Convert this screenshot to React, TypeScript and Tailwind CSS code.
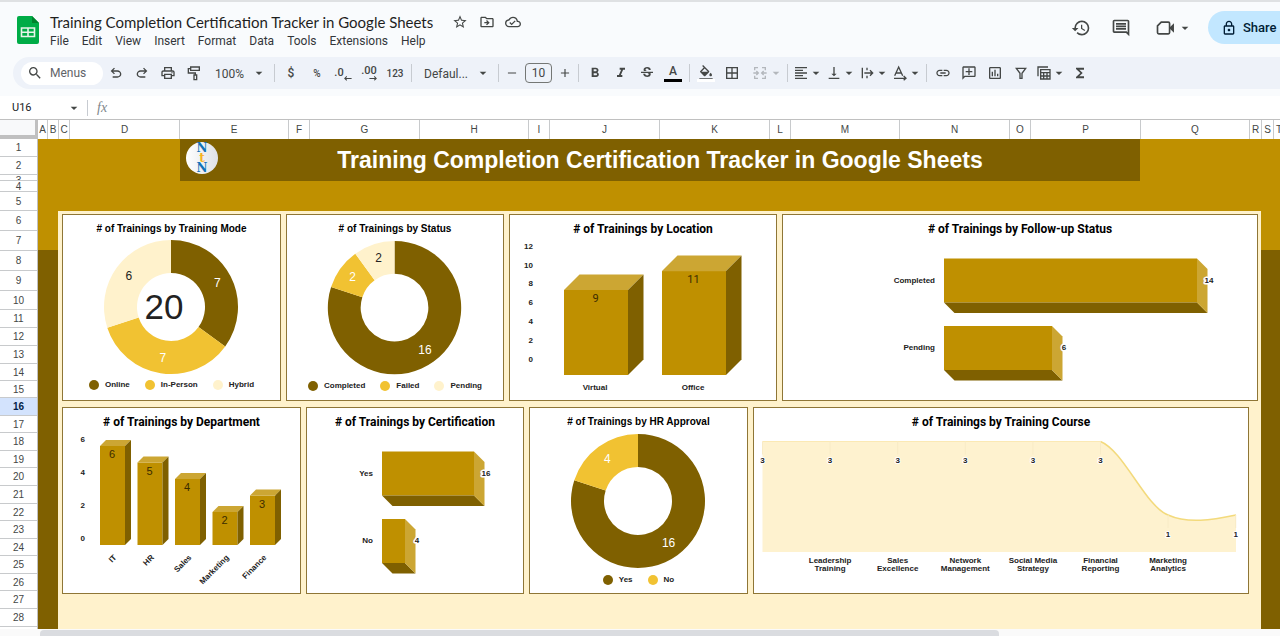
import React from 'react';
import {
  MdAdd,
  MdArrowDropDown,
  MdBorderAll,
  MdFormatAlignLeft,
  MdFormatBold,
  MdFormatColorFill,
  MdFormatItalic,
  MdFunctions,
  MdHistory,
  MdLink,
  MdOutlineAddComment,
  MdOutlineCloudDone,
  MdOutlineDriveFileMove,
  MdOutlineInsertChart,
  MdOutlineInsertComment,
  MdOutlineLocalPrintshop,
  MdOutlineLock,
  MdRemove,
  MdSearch,
  MdStarBorder,
  MdStrikethroughS,
  MdVerticalAlignBottom,
} from 'react-icons/md';

const GOLD = '#bf9000';
const DARK = '#7f6000';
const LIGHT = '#cca633';
const YELLOW = '#f1c232';
const CREAM = '#fff2cc';

const menus = ['File', 'Edit', 'View', 'Insert', 'Format', 'Data', 'Tools', 'Extensions', 'Help'];

const columns: [string, number][] = [
  ['A', 10], ['B', 11], ['C', 11], ['D', 110], ['E', 109], ['F', 21], ['G', 110], ['H', 109],
  ['I', 21], ['J', 110], ['K', 110], ['L', 21], ['M', 109], ['N', 110], ['O', 21], ['P', 110],
  ['Q', 109], ['R', 12], ['S', 12],
];

const rowHeights = [
  18, 18, 6, 11, 19, 20, 20, 20, 20, 19, 18, 18, 18, 17, 17, 18, 17, 18, 17, 18, 18, 17, 18, 17, 18,
  17, 18, 18,
];

/* ---------- Icons ---------- */

const UndoIcon = ({ className = '' }: { className?: string }) => (
  <svg viewBox="0 -960 960 960" fill="currentColor" className={className}>
    <path d="M280-200v-80h284q63 0 109.5-40T720-420q0-60-46.5-100T564-560H312l104 104-56 56-200-200 200-200 56 56-104 104h252q97 0 167 63t70 157q0 94-70 157t-167 63H280Z" />
  </svg>
);

const PaintRollerIcon = () => (
  <svg viewBox="0 0 24 24" fill="none" stroke="currentColor" strokeWidth="2" className="size-4">
    <path d="M7 3h13v5H7zM7 5.500H3.500V12H14v3M12 15h4v7h-4z" />
  </svg>
);

const DecimalArrow = ({ left = false }: { left?: boolean }) => (
  <svg viewBox="0 0 10 6" fill="none" stroke="currentColor" className={left ? 'w-2' : 'w-2 rotate-180'}>
    <path d="M9.500 3H1M3.500 .5 1 3l2.500 2.500" strokeWidth="1.300" />
  </svg>
);

const MergeIcon = () => (
  <svg viewBox="0 0 24 24" fill="none" stroke="currentColor" strokeWidth="2" className="size-4">
    <path d="M9 4H4v4M15 4h5v4M9 20H4v-4M15 20h5v-4M2 12h7M6.500 9l3 3-3 3M22 12h-7M17.500 9l-3 3 3 3" />
  </svg>
);

const WrapIcon = () => (
  <svg viewBox="0 0 24 24" fill="none" stroke="currentColor" strokeWidth="2" className="size-4">
    <path d="M5 4v16M12 4v4M12 16v4M8 12h12M16.500 8l4 4-4 4" />
  </svg>
);

const RotateIcon = () => (
  <svg viewBox="0 0 24 24" fill="none" stroke="currentColor" strokeWidth="2" className="size-4">
    <path d="M4 16 10 3l6 13M6 12h8M3 20h17M17.500 16.500 21 20l-3.500 3" />
  </svg>
);

const FilterIcon = () => (
  <svg viewBox="0 0 24 24" fill="none" stroke="currentColor" strokeWidth="2" className="size-4">
    <path d="M5 5h14l-5.500 7.500V20h-3v-7.500z" />
  </svg>
);

const TableViewIcon = () => (
  <svg viewBox="0 0 24 24" fill="none" stroke="currentColor" strokeWidth="2" className="size-4">
    <path d="M3 17V3h15M7 7h14v14H7zM7 11.500h14M7 16.500h14M11.500 11.500V21M16.500 11.500V21" />
  </svg>
);

const MeetIcon = () => (
  <svg viewBox="0 0 24 24" fill="none" stroke="currentColor" strokeWidth="2" className="size-5">
    <path d="M7.500 5H16a1.500 1.500 0 0 1 1.500 1.500v11A1.500 1.500 0 0 1 16 19H4.500A1.500 1.500 0 0 1 3 17.500v-8z" />
    <path d="m18 12 4-4v8z" fill="currentColor" strokeWidth="1.500" />
  </svg>
);

const SheetsLogo = () => (
  <svg viewBox="0 0 22 28" className="h-7 w-[22px] shrink-0">
    <path d="M2 0h13l7 7v19a2 2 0 0 1-2 2H2a2 2 0 0 1-2-2V2a2 2 0 0 1 2-2z" fill="#00ac47" />
    <path d="m15 0 7 7h-7z" fill="#00832d" />
    <path d="M4.500 12h13v8.500h-13zM4.500 16.200h13M11 12v8.500" fill="none" stroke="#e6f4ea" strokeWidth="1.600" />
  </svg>
);

/* ---------- Toolbar pieces ---------- */

const Divider = () => <span className="mx-[3px] h-[18px] w-px shrink-0 bg-[#c7cbd1]" />;

const Tool: React.FC<{ label: string; children: React.ReactNode }> = ({ label, children }) => (
  <button
    aria-label={label}
    className="flex h-6 w-[26px] shrink-0 items-center justify-center rounded hover:bg-black/5"
  >
    {children}
  </button>
);

const MenuTool: React.FC<{ label: string; children: React.ReactNode }> = ({ label, children }) => (
  <button aria-label={label} className="flex h-6 w-[33px] shrink-0 items-center rounded pl-0.5 hover:bg-black/5">
    {children}
    <MdArrowDropDown className="-ml-px size-4 shrink-0" />
  </button>
);

const Toolbar = () => (
  <div className="ml-[13px] flex h-8 items-center overflow-hidden rounded-l-full bg-[#eef2f9] text-[#444746]">
    <button className="ml-2 flex h-[23px] w-[82px] shrink-0 items-center gap-[7px] rounded-full bg-white pl-1.5 text-[12px] text-[#5f6368]">
      <MdSearch className="size-4 text-[#444746]" />
      Menus
    </button>
    <Tool label="Undo"><UndoIcon className="size-4" /></Tool>
    <Tool label="Redo"><UndoIcon className="size-4 -scale-x-100" /></Tool>
    <Tool label="Print"><MdOutlineLocalPrintshop className="size-4" /></Tool>
    <Tool label="Paint format"><PaintRollerIcon /></Tool>
    <div className="relative w-16 shrink-0">
      <select aria-label="Zoom" className="h-6 w-full appearance-none bg-transparent pl-2 text-[12px]">
        <option>100%</option>
      </select>
      <MdArrowDropDown className="pointer-events-none absolute right-1 top-1 size-4" />
    </div>
    <Divider />
    <Tool label="Format as currency"><span className="text-[12px] font-medium">$</span></Tool>
    <Tool label="Format as percent"><span className="text-[10px] font-medium">%</span></Tool>
    <Tool label="Decrease decimal places">
      <span className="flex items-end text-[11px] leading-4 font-medium">.0<DecimalArrow left /></span>
    </Tool>
    <Tool label="Increase decimal places">
      <span className="flex flex-col items-end text-[11px] leading-[10px] font-medium">.00<DecimalArrow /></span>
    </Tool>
    <Tool label="More formats"><span className="text-[10px] font-medium">123</span></Tool>
    <Divider />
    <div className="relative w-20 shrink-0">
      <select aria-label="Font" className="h-6 w-full appearance-none bg-transparent pl-[9px] text-[12px]">
        <option>Defaul...</option>
      </select>
      <MdArrowDropDown className="pointer-events-none absolute right-1 top-1 size-4" />
    </div>
    <Divider />
    <button aria-label="Decrease font size" className="flex h-6 w-5 shrink-0 items-center justify-center">
      <MdRemove className="size-[14px]" />
    </button>
    <input
      aria-label="Font size"
      defaultValue="10"
      className="mx-[3px] h-5 w-[27px] shrink-0 rounded border border-[#747775] bg-transparent text-center text-[12px]"
    />
    <button aria-label="Increase font size" className="flex h-6 w-5 shrink-0 items-center justify-center">
      <MdAdd className="size-[14px]" />
    </button>
    <Divider />
    <Tool label="Bold"><MdFormatBold className="size-4" /></Tool>
    <Tool label="Italic"><MdFormatItalic className="size-4" /></Tool>
    <Tool label="Strikethrough"><MdStrikethroughS className="size-4" /></Tool>
    <Tool label="Text color">
      <span className="flex flex-col items-center text-[12px] leading-3 font-medium">
        A<span className="mt-0.5 h-[3px] w-[18px] bg-black" />
      </span>
    </Tool>
    <Divider />
    <Tool label="Fill color">
      <span className="flex flex-col items-center">
        <MdFormatColorFill className="size-4" />
        <span className="-mt-0.5 h-[3px] w-[18px] bg-white" />
      </span>
    </Tool>
    <Tool label="Borders"><MdBorderAll className="size-4" /></Tool>
    <button
      aria-label="Merge cells"
      disabled
      className="flex h-6 w-[39px] shrink-0 items-center justify-between pl-[7px] text-[#b3b7bc]"
    >
      <MergeIcon />
      <MdArrowDropDown className="size-4" />
    </button>
    <Divider />
    <MenuTool label="Horizontal align"><MdFormatAlignLeft className="size-4 shrink-0" /></MenuTool>
    <MenuTool label="Vertical align"><MdVerticalAlignBottom className="size-4 shrink-0" /></MenuTool>
    <MenuTool label="Text wrapping"><WrapIcon /></MenuTool>
    <MenuTool label="Text rotation"><RotateIcon /></MenuTool>
    <Divider />
    <Tool label="Insert link"><MdLink className="size-4" /></Tool>
    <Tool label="Insert comment"><MdOutlineAddComment className="size-4 -scale-x-100" /></Tool>
    <Tool label="Insert chart"><MdOutlineInsertChart className="size-4" /></Tool>
    <Tool label="Create a filter"><FilterIcon /></Tool>
    <MenuTool label="Filter views"><TableViewIcon /></MenuTool>
    <Tool label="Functions"><MdFunctions className="size-4" /></Tool>
  </div>
);

const Header = () => (
  <header className="border-t-2 border-[#dfe1e3] bg-[#f9fbfd] pb-[7px]">
    <div className="flex h-[55px] pl-[17px]">
      <div className="pt-3.5"><SheetsLogo /></div>
      <div className="ml-[11px] pt-[9px]">
        <div className="flex h-[22px] items-center text-[#444746]">
          <h1 className="font-['Lato'] text-[15px] text-[#1f1f1f]">
            Training Completion Certification Tracker in Google Sheets
          </h1>
          <button aria-label="Star" className="ml-[19px]"><MdStarBorder className="size-4" /></button>
          <button aria-label="Move" className="ml-[11px]"><MdOutlineDriveFileMove className="size-4" /></button>
          <button aria-label="Saved to Drive" className="ml-[10px]"><MdOutlineCloudDone className="size-4" /></button>
        </div>
        <nav className="flex gap-[13px] text-[12px] leading-4 text-[#33363a]">
          {menus.map((m) => (
            <button key={m}>{m}</button>
          ))}
        </nav>
      </div>
      <div className="ml-auto flex items-start pt-[9px] text-[#444746]">
        <div className="flex h-[33px] items-center">
          <button aria-label="Version history"><MdHistory className="size-5" /></button>
          <button aria-label="Comments" className="ml-5"><MdOutlineInsertComment className="size-5" /></button>
          <button aria-label="Join a call" className="ml-6 flex items-center">
            <MeetIcon />
            <MdArrowDropDown className="ml-0.5 size-4" />
          </button>
        </div>
        <button className="ml-[15px] flex h-[33px] w-[72px] items-center gap-1.5 rounded-l-full bg-[#c2e7ff] pl-[13px] text-[13px] font-medium text-[#001d35]">
          <MdOutlineLock className="size-4 shrink-0" />
          Share
        </button>
      </div>
    </div>
    <Toolbar />
  </header>
);

const FormulaBar = () => (
  <div className="flex h-[23px] items-center bg-white">
    <div className="flex w-[88px] items-center justify-between border-r border-[#c7cbd1] pr-[5px] pl-3 text-[11px] leading-4 text-[#202124]">
      U16
      <MdArrowDropDown className="size-4 text-[#444746]" />
    </div>
    <span className="ml-[9px] font-['Liberation_Serif'] text-[14px] text-[#80868b] italic">fx</span>
    <input aria-label="Formula" className="h-full flex-1 bg-transparent px-2 text-[12px] outline-none" />
  </div>
);

const ColumnHeader = () => (
  <div className="flex h-5 border-t border-[#c0c0c0] bg-white font-['Liberation_Sans'] text-[10px] text-[#444746]">
    <div className="w-[38px] shrink-0 border-r-[3px] border-b-4 border-[#c0c0c0] bg-[#f8f9fa]" />
    {columns.map(([name, width]) => (
      <div
        key={name}
        style={{ width }}
        className="flex shrink-0 items-center justify-center overflow-hidden border-r border-[#c8cacc]"
      >
        {name}
      </div>
    ))}
    <div className="flex flex-1 items-center overflow-hidden pl-0.5">T</div>
  </div>
);

const RowHeader = () => (
  <div className="w-[38px] shrink-0 border-r border-[#c0c0c0] bg-white font-['Liberation_Sans'] text-[10px] text-[#444746]">
    {rowHeights.map((height, i) => (
      <div
        key={i}
        style={{ height }}
        className={
          i + 1 === 16
            ? 'flex items-center justify-center border-b border-[#c8cacc] bg-[#d3e3fd] font-bold text-[#041e49]'
            : height < 10
              ? 'flex items-start justify-center overflow-hidden border-b border-[#c8cacc] leading-3'
              : 'flex items-center justify-center overflow-hidden border-b border-[#c8cacc]'
        }
      >
        {i + 1}
      </div>
    ))}
  </div>
);

/* ---------- Charts ---------- */

interface CardProps {
  title: string;
  titleClass?: string;
  children: React.ReactNode;
}

const Card: React.FC<CardProps> = ({ title, titleClass = "font-['Roboto'] text-[12px]", children }) => (
  <section className="border border-[#8f7636] bg-white pt-[5px] pb-px">
    <h3 className={`text-center leading-[18px] font-bold whitespace-nowrap text-black ${titleClass}`}>{title}</h3>
    {children}
  </section>
);

interface Slice {
  name: string;
  value: number;
  color: string;
  dark?: boolean;
}

interface DonutProps {
  slices: Slice[];
  height: number;
  cy: number;
  center?: string;
}

const Donut: React.FC<DonutProps> = ({ slices, height, cy, center }) => {
  const cx = 108;
  const r = 67;
  const hole = 34;
  const total = slices.reduce((sum, s) => sum + s.value, 0);
  const at = (share: number, radius: number) => {
    const a = share * 2 * Math.PI;
    return [cx + radius * Math.sin(a), cy - radius * Math.cos(a)];
  };
  let start = 0;

  return (
    <>
      <svg viewBox={`0 0 217 ${height}`} className="block w-full">
        {slices.map((s) => {
          const from = start;
          const to = start + s.value / total;
          start = to;
          const large = to - from > 0.5 ? 1 : 0;
          const [lx, ly] = at((from + to) / 2, 52);
          return (
            <g key={s.name}>
              <path
                d={`M${at(from, r)} A${r} ${r} 0 ${large} 1 ${at(to, r)} L${at(to, hole)} A${hole} ${hole} 0 ${large} 0 ${at(from, hole)}Z`}
                fill={s.color}
              />
              <text x={lx} y={ly + 4} textAnchor="middle" fill={s.dark ? '#222' : '#fff'} className="text-[12px]">
                {s.value}
              </text>
            </g>
          );
        })}
        {center && (
          <text x="101" y={cy + 12} textAnchor="middle" fill="#222" className="text-[35px]">
            {center}
          </text>
        )}
      </svg>
      <ul className="flex justify-center gap-[15px] text-[8px] leading-[18px] font-bold text-[#222]">
        {slices.map((s) => (
          <li key={s.name} className="flex items-center gap-1.5">
            <span className="size-[10px] rounded-full" style={{ backgroundColor: s.color }} />
            {s.name}
          </li>
        ))}
      </ul>
    </>
  );
};

// Upright bar with a top and a right face
const Column3D = ({ x, top, base, width, depth }: Record<'x' | 'top' | 'base' | 'width' | 'depth', number>) => (
  <g>
    <rect x={x} y={top} width={width} height={base - top} fill={GOLD} />
    <path d={`M${x} ${top}l${depth} ${-depth}h${width}l${-depth} ${depth}z`} fill={LIGHT} />
    <path d={`M${x + width} ${top}l${depth} ${-depth}V${base - depth}l${-depth} ${depth}z`} fill={DARK} />
  </g>
);

// Lying bar with a bottom and a right face
const Bar3D = ({ x, y, width }: Record<'x' | 'y' | 'width', number>) => (
  <g>
    <rect x={x} y={y} width={width} height="44" fill={GOLD} />
    <path d={`M${x} ${y + 44}h${width}l10.500 10.500h${-width}z`} fill={DARK} />
    <path d={`M${x + width} ${y}l10.500 10.500v44l-10.500 -10.500z`} fill={LIGHT} />
  </g>
);

const LocationChart = () => {
  const bars = [
    { name: 'Virtual', value: 9, x: 54 },
    { name: 'Office', value: 11, x: 152 },
  ];
  return (
    <svg viewBox="0 0 266 161" className="block w-full">
      {[0, 2, 4, 6, 8, 10, 12].map((n) => (
        <text key={n} x="23" y={124 - n * 9.45} textAnchor="end" fill="#222" className="text-[8px] font-bold">
          {n}
        </text>
      ))}
      {bars.map((b) => {
        const top = 137 - b.value * 9.45;
        return (
          <g key={b.name}>
            <Column3D x={b.x} top={top} base={137} width={64} depth={15.5} />
            <text x={b.x + 31.5} y={top + 12} textAnchor="middle" fill="#3b2c00" className="font-['Roboto'] text-[11px]">
              {b.value}
            </text>
            <text x={b.x + 31} y="152" textAnchor="middle" fill="#222" className="text-[8px] font-bold">
              {b.name}
            </text>
          </g>
        );
      })}
    </svg>
  );
};

const DepartmentChart = () => {
  const bars: [string, number][] = [['IT', 6], ['HR', 5], ['Sales', 4], ['Marketing', 2], ['Finance', 3]];
  return (
    <svg viewBox="0 0 237 161" className="block w-full">
      {[0, 2, 4, 6].map((n) => (
        <text key={n} x="22" y={110 - n * 16.5} textAnchor="end" fill="#222" className="text-[8px] font-bold">
          {n}
        </text>
      ))}
      {bars.map(([name, value], i) => {
        const x = 37 + i * 37.5;
        const top = 114 - value * 16.5;
        return (
          <g key={name}>
            <Column3D x={x} top={top} base={114} width={25} depth={6} />
            <text x={x + 12} y={top + 12} textAnchor="middle" fill="#3b2c00" className="text-[11px]">
              {value}
            </text>
            <text
              transform={`translate(${x + 17} 127) rotate(-45)`}
              textAnchor="end"
              fill="#222"
              className="text-[8px] font-bold"
            >
              {name}
            </text>
          </g>
        );
      })}
    </svg>
  );
};

interface BarRow {
  name: string;
  value: number;
  width: number;
}

const BarChart = ({ rows, x, viewWidth }: { rows: BarRow[]; x: number; viewWidth: number }) => (
  <svg viewBox={`0 0 ${viewWidth} 161`} className="block w-full">
    {rows.map((row, i) => {
      const y = 20.5 + i * 67.5;
      return (
        <g key={row.name}>
          <Bar3D x={x} y={y} width={row.width} />
          <text x={x - 9} y={y + 24} textAnchor="end" fill="#222" className="text-[8px] font-bold">
            {row.name}
          </text>
          <text
            x={x + row.width + 12}
            y={y + 24}
            textAnchor="middle"
            fill="#222"
            stroke="#fff"
            strokeWidth="3"
            strokeLinejoin="round"
            paintOrder="stroke"
            className="text-[8px] font-bold"
          >
            {row.value}
          </text>
        </g>
      );
    })}
  </svg>
);

const CourseChart = () => {
  const values = [3, 3, 3, 3, 3, 3, 1, 1];
  const labels = [
    ['Leadership', 'Training'],
    ['Sales', 'Excellence'],
    ['Network', 'Management'],
    ['Social Media', 'Strategy'],
    ['Financial', 'Reporting'],
    ['Marketing', 'Analytics'],
  ];
  const px = (i: number) => 8.5 + i * 67.6;
  const curve = 'C370 20 391 75 414 84C434 93 458 89 482 84';
  return (
    <svg viewBox="0 0 494 161" className="block w-full">
      <path d={`M8.500 10.500H346.500${curve}V121H8.500z`} fill="#fef2cf" />
      <path d="M8.500 10.500H346.500" stroke="#fbe9b4" fill="none" />
      <path d={`M346.500 10.500${curve}`} stroke="#f3da7c" strokeWidth="1.500" fill="none" />
      {values.map((v, i) => {
        const top = v === 3 ? 10.5 : 84;
        return (
          <g key={i}>
            <path d={`M${px(i)} ${top}v13`} stroke="#f8ebc6" />
            <text
              x={px(i)}
              y={top + 21.5}
              textAnchor="middle"
              fill="#222"
              stroke="#fff"
              strokeWidth="2"
              strokeLinejoin="round"
              paintOrder="stroke"
              className="text-[8px] font-bold"
            >
              {v}
            </text>
          </g>
        );
      })}
      {labels.map(([first, second], i) => (
        <text key={first} textAnchor="middle" fill="#222" className="text-[8px] font-bold">
          <tspan x={px(i + 1)} y="132">{first}</tspan>
          <tspan x={px(i + 1)} y="140">{second}</tspan>
        </text>
      ))}
    </svg>
  );
};

/* ---------- Dashboard ---------- */

const Badge = () => (
  <div className="flex size-8 shrink-0 flex-col items-center justify-center rounded-full bg-linear-to-r from-white to-[#dfe1e6] font-['DejaVu_Serif'] text-[12px] leading-[10px] font-bold text-[#1272b8]">
    <span>N</span>
    <span className="text-[#f6b221]">t</span>
    <span>N</span>
  </div>
);

const Dashboard = () => (
  <main className="flex flex-1 flex-col bg-[#7f6000] font-['Liberation_Sans']">
    <div className="h-[72px] bg-[#bf9000] pr-[140px] pl-[142px]">
      <div className="flex h-[42px] bg-[#7f6000] pt-[3px] pl-1.5">
        <Badge />
        <h2 className="mr-[38px] flex-1 text-center text-[23px] leading-9 font-bold text-white">
          Training Completion Certification Tracker in Google Sheets
        </h2>
      </div>
    </div>
    <div className="flex flex-1">
      <div className="w-5 shrink-0">
        <div className="h-[39px] bg-[#bf9000]" />
      </div>
      <div className="flex-1 bg-[#fff2cc] pt-[3px] pb-8">
        <div className="mr-[3px] ml-1 grid grid-cols-[219fr_218fr_268fr_476fr] gap-[5px]">
          <Card title="# of Trainings by Training Mode" titleClass="text-[10px]">
            <Donut
              height={138}
              cy={69}
              center="20"
              slices={[
                { name: 'Online', value: 7, color: DARK },
                { name: 'In-Person', value: 7, color: YELLOW },
                { name: 'Hybrid', value: 6, color: CREAM, dark: true },
              ]}
            />
          </Card>
          <Card title="# of Trainings by Status" titleClass="text-[10px]">
            <Donut
              height={140}
              cy={70}
              slices={[
                { name: 'Completed', value: 16, color: DARK },
                { name: 'Failed', value: 2, color: YELLOW },
                { name: 'Pending', value: 2, color: CREAM, dark: true },
              ]}
            />
          </Card>
          <Card title="# of Trainings by Location">
            <LocationChart />
          </Card>
          <Card title="# of Trainings by Follow-up Status">
            <BarChart
              x={161}
              viewWidth={474}
              rows={[
                { name: 'Completed', value: 14, width: 253 },
                { name: 'Pending', value: 6, width: 108 },
              ]}
            />
          </Card>
        </div>
        <div className="mt-1.5 mr-3 ml-1 grid grid-cols-[239fr_218fr_219fr_496fr] gap-[5px]">
          <Card title="# of Trainings by Department">
            <DepartmentChart />
          </Card>
          <Card title="# of Trainings by Certification">
            <BarChart
              x={75}
              viewWidth={216}
              rows={[
                { name: 'Yes', value: 16, width: 92 },
                { name: 'No', value: 4, width: 23 },
              ]}
            />
          </Card>
          <Card title="# of Trainings by HR Approval" titleClass="text-[10px]">
            <Donut
              height={140}
              cy={70}
              slices={[
                { name: 'Yes', value: 16, color: DARK },
                { name: 'No', value: 4, color: YELLOW },
              ]}
            />
          </Card>
          <Card title="# of Trainings by Training Course">
            <CourseChart />
          </Card>
        </div>
      </div>
      <div className="w-[19px] shrink-0">
        <div className="h-[39px] bg-[#bf9000]" />
      </div>
    </div>
  </main>
);

export default function App() {
  return (
    <div className="flex min-h-screen flex-col overflow-hidden bg-white font-['Roboto']">
      <Header />
      <FormulaBar />
      <ColumnHeader />
      <div className="flex flex-1">
        <RowHeader />
        <Dashboard />
      </div>
      <div className="h-[7px] overflow-hidden bg-[#fafafa] pt-px pl-10">
        <div className="h-3 w-[959px] rounded bg-[#dadce0]" />
      </div>
    </div>
  );
}
